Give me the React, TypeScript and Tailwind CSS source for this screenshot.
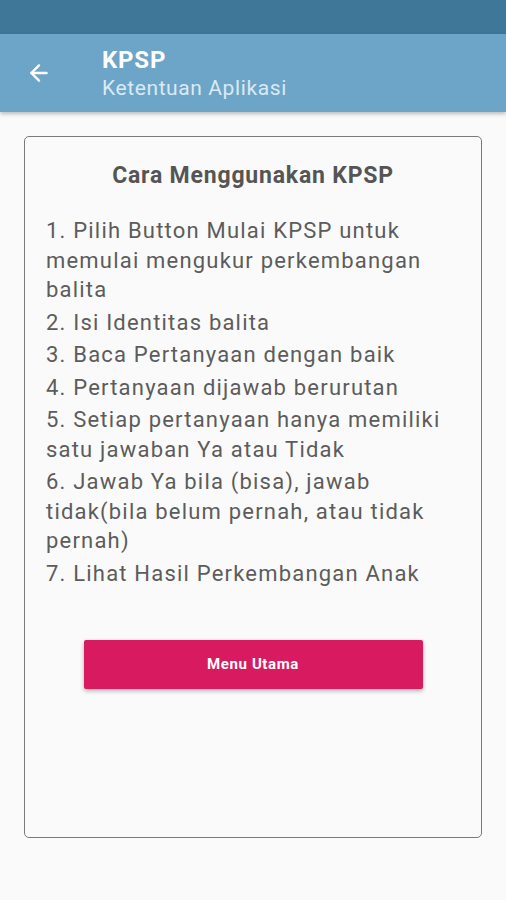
import { ArrowLeft } from "lucide-react";

const steps = [
  "1. Pilih Button Mulai KPSP untuk memulai mengukur perkembangan balita",
  "2. Isi Identitas balita",
  "3. Baca Pertanyaan dengan baik",
  "4. Pertanyaan dijawab berurutan",
  "5. Setiap pertanyaan hanya memiliki satu jawaban Ya atau Tidak",
  "6. Jawab Ya bila (bisa), jawab tidak(bila belum pernah, atau tidak pernah)",
  "7. Lihat Hasil Perkembangan Anak",
];

export default function App() {
  return (
    <div className="flex h-[900px] w-[506px] flex-col bg-[#fafafa] font-['Roboto',sans-serif]">
      {/* status bar */}
      <div className="h-[34px] bg-[#3f7798]" />

      {/* app bar */}
      <div className="flex h-[78px] items-center bg-[#6ca5c8] shadow-[0_2px_4px_rgba(0,0,0,0.25)]">
        <div className="flex w-[102px] justify-center pr-[24px]">
          <ArrowLeft className="h-[26px] w-[28px] text-white" strokeWidth={2.2} />
        </div>
        <div className="flex flex-col">
          <span className="text-[24px] font-bold leading-[30px] tracking-[0.8px] text-white">KPSP</span>
          <span className="text-[21px] leading-[26px] tracking-[0.6px] text-[#dbe9f3]">Ketentuan Aplikasi</span>
        </div>
      </div>

      {/* card */}
      <div className="px-[24px] pt-[24px]">
        <div className="flex h-[702px] flex-col rounded-[5px] border-[1.5px] border-[#7a7a7a] bg-[#fafafa] px-[21px]">
          <h1 className="mt-[25px] text-center text-[23px] font-bold leading-[28px] tracking-[0.8px] text-[#555555]">
            Cara Menggunakan KPSP
          </h1>
          <div className="mt-[26px] flex flex-col gap-[3px]">
            {steps.map((s) => (
              <p key={s} className="text-[22px] leading-[29.5px] tracking-[1.2px] text-[#5c5c5c]">
                {s}
              </p>
            ))}
          </div>
          <div className="mt-[52px] flex justify-center">
            <button className="h-[49px] w-[339px] rounded-[2px] bg-[#d81b60] text-[15px] font-bold tracking-[0.6px] text-white shadow-[0_2px_4px_rgba(0,0,0,0.3)]">
              Menu Utama
            </button>
          </div>
        </div>
      </div>
    </div>
  );
}
